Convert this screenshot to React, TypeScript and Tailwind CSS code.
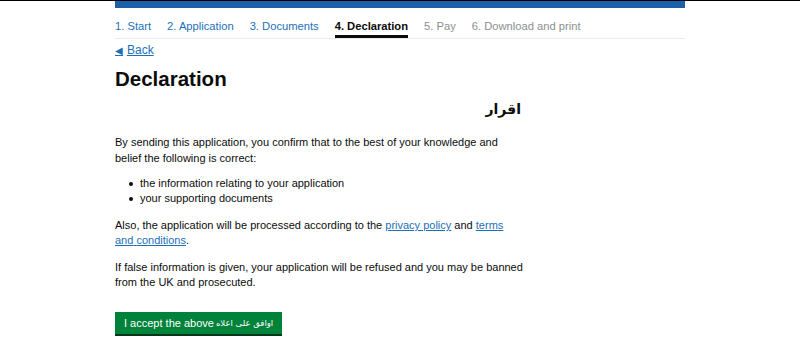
import React from "react";

const font = { fontFamily: '"Liberation Sans", Arial, sans-serif' };
const arabic = { fontFamily: '"DejaVu Sans", sans-serif' };

function Step({ label, state }: { label: string; state: "done" | "active" | "todo" }) {
  if (state === "active") {
    return (
      <div className="relative h-full flex items-end pb-[5px] font-bold text-[#0b0c0c]">
        {label}
        <span className="absolute left-0 right-0 bottom-0 h-[3px] bg-[#0b0c0c]" />
      </div>
    );
  }
  return (
    <div className={"h-full flex items-end pb-[5px] " + (state === "done" ? "text-[#1d70b8]" : "text-[#8a8f91]")}>{label}</div>
  );
}

function Bullet({ children }: { children: React.ReactNode }) {
  return (
    <li className="flex items-center">
      <span className="w-[4px] h-[4px] rounded-full bg-[#0b0c0c] ml-[14px] mr-[7px]" />
      {children}
    </li>
  );
}

export default function App() {
  return (
    <div className="w-[800px] h-[354px] bg-white overflow-hidden border-t border-black" style={font}>
      <div className="w-[570px] mx-auto">
        <div className="h-[7px] bg-[#1d5fa8]" />
        <div className="h-[31px] flex items-end border-b border-[#ececec]">
          <div className="h-[31px] flex gap-[16px] text-[11.2px] leading-[13px]">
            <Step label="1. Start" state="done" />
            <Step label="2. Application" state="done" />
            <Step label="3. Documents" state="done" />
            <Step label="4. Declaration" state="active" />
            <Step label="5. Pay" state="todo" />
            <Step label="6. Download and print" state="todo" />
          </div>
        </div>
        <div className="w-[410px] text-[#0b0c0c] text-[11px] leading-[15px]">
          <a className="mt-[4px] flex items-center gap-[4px] text-[#1d70b8] underline text-[12px]">
            <span className="text-[10px]">◀</span>Back
          </a>
          <h1 className="mt-[8px] text-[20.5px] leading-[26px] font-bold">Declaration</h1>
          <div className="mt-[5px] text-right text-[14px] leading-[24px] font-bold pr-[4px]" dir="rtl" style={arabic}>اقرار</div>
          <p className="mt-[13px] leading-[16px]">
            By sending this application, you confirm that to the best of your knowledge and belief the following is correct:
          </p>
          <ul className="mt-[10px]">
            <Bullet>the information relating to your application</Bullet>
            <Bullet>your supporting documents</Bullet>
          </ul>
          <p className="mt-[12px]">
            Also, the application will be processed according to the{" "}
            <a className="text-[#1d70b8] underline">privacy policy</a> and{" "}
            <a className="text-[#1d70b8] underline">terms and{"\u00a0"}conditions</a>.
          </p>
          <p className="mt-[12px]">
            If false information is given, your application will be refused and you may be banned from the UK and prosecuted.
          </p>
          <button className="mt-[22px] h-[22px] px-[9px] bg-[#00823b] text-white text-[11px] shadow-[0_2px_0_#003618] flex items-center">
            I accept the above <span className="ml-[2px] text-[8.5px]" style={arabic}>اوافق على اعلاه</span>
          </button>
        </div>
      </div>
    </div>
  );
}
